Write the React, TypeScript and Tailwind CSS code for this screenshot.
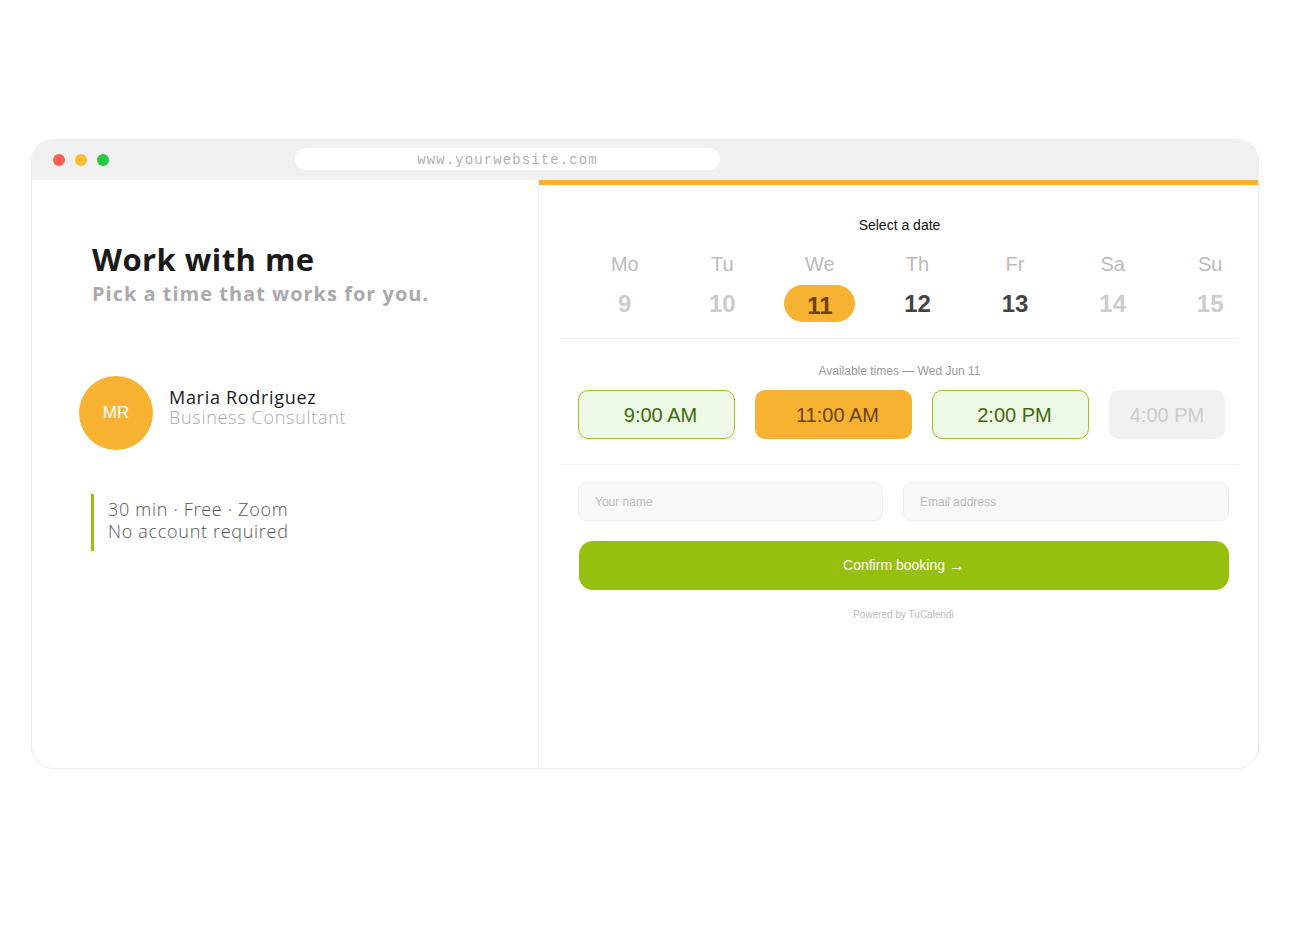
import React from "react";

const days = [
  { d: "Mo", n: "9", s: "off" },
  { d: "Tu", n: "10", s: "off" },
  { d: "We", n: "11", s: "sel" },
  { d: "Th", n: "12", s: "on" },
  { d: "Fr", n: "13", s: "on" },
  { d: "Sa", n: "14", s: "off" },
  { d: "Su", n: "15", s: "off" },
];

export default function App() {
  return (
    <div className="w-[1290px] h-[930px] bg-white overflow-hidden">
      <div className="mx-auto mt-[139px] w-[1228px] h-[630px] rounded-[22px] border border-[#ececec] overflow-hidden flex flex-col">
        {/* top bar */}
        <div className="h-[40px] bg-[#f0f0f0] flex items-start shrink-0">
          <div className="flex gap-[10px] pl-[21px] pt-[14px]">
            <span className="w-[12px] h-[12px] rounded-full bg-[#ff5f57]" />
            <span className="w-[12px] h-[12px] rounded-full bg-[#febc2e]" />
            <span className="w-[12px] h-[12px] rounded-full bg-[#28c840]" />
          </div>
          <div
            className="ml-[186px] mt-[8px] w-[425px] h-[22px] rounded-full bg-white flex items-center justify-center text-[14px] tracking-[1.1px] text-[#b0b0b0] pt-[2px]"
            style={{ fontFamily: '"Liberation Mono", monospace' }}
          >
            www.yourwebsite.com
          </div>
        </div>
        {/* body */}
        <div className="flex flex-1">
          {/* left */}
          <div className="w-[507px] border-r border-[#eeeeee] shrink-0" style={{ fontFamily: '"Open Sans", sans-serif' }}>
            <div className="pl-[60px] pt-[60px]">
              <div className="text-[31px] leading-[38px] font-bold text-[#1a1a1a] tracking-[0.45px]">Work with me</div>
              <div className="text-[20px] leading-[26px] font-bold text-[#aaaaaa] tracking-[1px] mt-[3px]">Pick a time that works for you.</div>
            </div>
            <div className="flex items-center pl-[47px] mt-[69px]">
              <div
                className="w-[74px] h-[74px] rounded-full bg-[#f7b232] flex items-center justify-center text-white text-[17px]"
                style={{ fontFamily: '"Liberation Sans", sans-serif' }}
              >
                MR
              </div>
              <div className="ml-[16px] -mt-[12px]">
                <div className="text-[18px] leading-[20px] text-[#1a1a1a] tracking-[0.7px]">Maria Rodriguez</div>
                <div className="text-[18px] leading-[20px] text-[#aaaaaa] tracking-[0.7px] font-light">Business Consultant</div>
              </div>
            </div>
            <div className="ml-[59px] mt-[44px] border-l-[3px] border-[#97c10f] pl-[14px] h-[57px] pt-[4px]">
              <div className="text-[18px] leading-[22px] text-[#555555] tracking-[0.7px] font-light">30 min · Free · Zoom</div>
              <div className="text-[18px] leading-[22px] text-[#555555] tracking-[0.7px] font-light">No account required</div>
            </div>
          </div>
          {/* right */}
          <div className="flex-1 flex flex-col" style={{ fontFamily: '"Liberation Sans", Arial, sans-serif' }}>
            <div className="h-[5px] bg-[#f7b232] shrink-0" />
            <div className="pl-[21px] pr-[19px]">
              <div className="text-center text-[14px] leading-[16px] text-[#111111] mt-[32px]">Select a date</div>
              <div className="border-b border-[#f0f0f0] mt-[19px] pb-[16px]">
                <div className="grid grid-cols-7 pl-[16px] -mr-[20px]">
                  {days.map((x) => (
                    <div key={x.d} className="flex flex-col items-center">
                      <div className="text-[20px] leading-[24px] text-[#bbbbbb]">{x.d}</div>
                      <div
                        className={
                          "mt-[9px] h-[37px] flex items-center justify-center text-[24px] font-bold " +
                          (x.s === "sel"
                            ? "w-[71px] rounded-full bg-[#f7b232] text-[#6b4300] pt-[4px]"
                            : x.s === "on"
                            ? "text-[#444444]"
                            : "text-[#cccccc]")
                        }
                      >
                        {x.n}
                      </div>
                    </div>
                  ))}
                </div>
              </div>
              <div className="text-center text-[12px] leading-[14px] text-[#999999] mt-[25px]">Available times — Wed Jun 11</div>
              <div className="flex gap-[20px] pl-[18px] mt-[12px] pb-[25px] border-b border-[#f0f0f0]">
                <div className="w-[157px] h-[49px] rounded-[10px] bg-[#eef8e6] border border-[#9dc41a] flex items-center justify-center pl-[8px] text-[20px] text-[#3d6b0a]">9:00 AM</div>
                <div className="w-[157px] h-[49px] rounded-[10px] bg-[#f7b232] flex items-center justify-center pl-[8px] text-[20px] text-[#6b4300]">11:00 AM</div>
                <div className="w-[157px] h-[49px] rounded-[10px] bg-[#eef8e6] border border-[#9dc41a] flex items-center justify-center pl-[8px] text-[20px] text-[#3d6b0a]">2:00 PM</div>
                <div className="w-[116px] h-[49px] rounded-[10px] bg-[#f0f0f0] flex items-center justify-center text-[20px] text-[#cccccc]">4:00 PM</div>
              </div>
              <div className="pl-[18px] pr-[10px]">
                <div className="flex gap-[20px] mt-[17px]">
                  <div className="w-[305px] h-[39px] rounded-[8px] bg-[#f8f8f8] border border-[#eeeeee] flex items-center pl-[16px] text-[12px] text-[#bbbbbb]">Your name</div>
                  <div className="flex-1 h-[39px] rounded-[8px] bg-[#f8f8f8] border border-[#eeeeee] flex items-center pl-[16px] text-[12px] text-[#bbbbbb]">Email address</div>
                </div>
                <div className="mt-[20px] h-[49px] ml-[1px] rounded-[14px] bg-[#96c00e] flex items-center justify-center text-[14px] text-white">
                  Confirm booking <span className="ml-[4px] text-[16px]">→</span>
                </div>
                <div className="text-center text-[10px] leading-[12px] text-[#bbbbbb] mt-[19px]">Powered by TuCalendi</div>
              </div>
            </div>
          </div>
        </div>
      </div>
    </div>
  );
}
